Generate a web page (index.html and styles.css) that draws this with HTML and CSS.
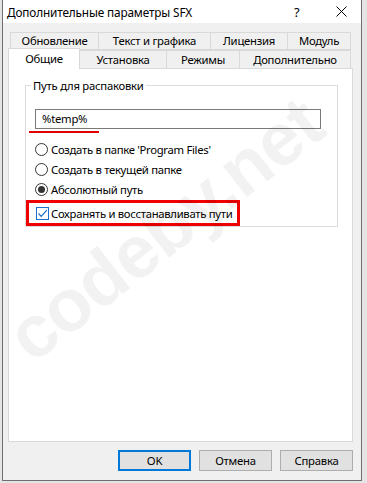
FILE: index.html
```html
<!DOCTYPE html>
<html lang="ru">
<head>
  <meta charset="UTF-8">
  <title>Дополнительные параметры SFX</title>
  <link rel="stylesheet" href="styles.css">
</head>
<body>
  <div class="screen">
    <div class="dialog">
      <!-- Заголовок окна -->
      <div class="titlebar">
        <span class="title">Дополнительные параметры SFX</span>
        <span class="help">?</span>
        <span class="close">
          <svg width="11" height="11" viewBox="0 0 11 11"><path d="M0.5 0.5 L10.5 10.5 M10.5 0.5 L0.5 10.5" stroke="#000" stroke-width="1" fill="none"/></svg>
        </span>
      </div>

      <div class="content">
        <!-- Вкладки -->
        <div class="tabs">
          <div class="tabrow back">
            <div class="tab" style="width:88px">Обновление</div>
            <div class="tab" style="width:112px">Текст и графика</div>
            <div class="tab" style="width:77px">Лицензия</div>
            <div class="tab" style="width:64px">Модуль</div>
          </div>
          <div class="tabrow front">
            <div class="tab active" style="width:72px">Общие</div>
            <div class="tab" style="width:86px">Установка</div>
            <div class="tab" style="width:73px">Режимы</div>
            <div class="tab" style="width:112px">Дополнительно</div>
          </div>
        </div>

        <div class="panel">
          <div class="group">
            <div class="group-label">Путь для распаковки</div>
            <div class="path-input">%temp%</div>
            <div class="underline"></div>

            <label class="option"><span class="radio"></span>Создать в папке 'Program Files'</label>
            <label class="option"><span class="radio"></span>Создать в текущей папке</label>
            <label class="option"><span class="radio checked"></span>Абсолютный путь</label>

            <div class="highlight">
              <label class="option">
                <span class="checkbox">
                  <svg width="11" height="11" viewBox="0 0 11 11"><path d="M1.5 5.5 L4.2 8.3 L9.8 2.2" stroke="#1c6fcc" stroke-width="1.2" fill="none"/></svg>
                </span>Сохранять и восстанавливать пути
              </label>
            </div>
          </div>
        </div>

        <div class="buttons">
          <button class="btn default">OK</button>
          <button class="btn">Отмена</button>
          <button class="btn">Справка</button>
        </div>
      </div>
    </div>

    <div class="watermark">codeby.net</div>
  </div>
</body>
</html>
```

FILE: styles.css
```css
body {
  margin: 0;
  padding: 0;
  background-color: #e4e4e4;
  font-family: "Noto Sans", "Liberation Sans", sans-serif;
  font-size: 11.3px;
  letter-spacing: -0.25px;
  color: #000;
}

.screen {
  position: relative;
  width: 367px;
  height: 483px;
  overflow: hidden;
  background-color: #e4e4e4;
}

.dialog {
  margin-left: 2px;
  width: 358px;
  height: 480px;
  border: 1px solid #6f6f6f;
  border-top: none;
  background-color: #f0f0f0;
  display: flex;
  flex-direction: column;
}

.titlebar {
  height: 23px;
  background-color: #fff;
  display: flex;
  align-items: center;
}

.title {
  margin-left: 4px;
  flex: 1;
  font-size: 11.8px;
  letter-spacing: -0.15px;
}

.help {
  width: 42px;
  font-size: 13px;
}

.close {
  width: 25px;
  height: 11px;
  display: flex;
}

.content {
  flex: 1;
  padding: 9px 8px 0 5px;
  display: flex;
  flex-direction: column;
}

.tabs {
  display: flex;
  flex-direction: column;
}

.tabrow {
  display: flex;
  height: 18px;
}

.tabrow.back {
  padding-left: 2px;
}

.tab {
  height: 18px;
  box-sizing: border-box;
  border: 1px solid #d9d9d9;
  border-right: none;
  background-color: #f0f0f0;
  display: flex;
  align-items: center;
  justify-content: center;
  line-height: 16px;
  white-space: nowrap;
}

.tab:last-child {
  border-right: 1px solid #d9d9d9;
}

.tabrow.front .tab {
  border-bottom: none;
}

.tab.active {
  height: 21px;
  margin-top: -2px;
  background-color: #fff;
  border-right: 1px solid #d9d9d9;
  position: relative;
  z-index: 1;
  align-items: flex-start;
  padding-top: 2px;
}

.tab.active + .tab {
  border-left: none;
}

.panel {
  width: 327px;
  height: 356px;
  border: 1px solid #d9d9d9;
  background-color: #fff;
  padding: 16px 0 0 16px;
}

.group {
  width: 311px;
  height: 140px;
  border: 1px solid #dcdcdc;
}

.group-label {
  display: inline-block;
  margin: -8px 0 0 5px;
  padding: 0 2px;
  background-color: #fff;
  line-height: 16px;
  vertical-align: top;
}

.path-input {
  margin: 8px 0 0 9px;
  width: 278px;
  height: 18px;
  border: 1px solid #7a7a7a;
  padding-left: 6px;
  line-height: 18px;
}

.underline {
  margin: 2px 0 0 3px;
  width: 70px;
  height: 2px;
  background-color: #e00000;
}

.option {
  display: flex;
  align-items: center;
  height: 20px;
  padding-left: 9px;
  white-space: nowrap;
  letter-spacing: -0.3px;
}

.option:first-of-type {
  margin-top: 6px;
}

.radio {
  width: 11px;
  height: 11px;
  border: 1px solid #333;
  border-radius: 50%;
  background-color: #fff;
  margin-right: 3px;
  display: flex;
  align-items: center;
  justify-content: center;
}

.radio.checked::after {
  content: "";
  width: 7px;
  height: 7px;
  border-radius: 50%;
  background-color: #333;
}

.highlight {
  margin-top: 1px;
  width: 208px;
  height: 20px;
  border: 3px solid #f00000;
}

.highlight .option {
  padding-left: 7px;
  margin-top: 0;
}

.checkbox {
  width: 11px;
  height: 11px;
  border: 1px solid #1c6fcc;
  background-color: #fff;
  margin-right: 2px;
  display: flex;
}

.buttons {
  display: flex;
  justify-content: flex-end;
  gap: 8px;
  margin-top: 8px;
}

.btn {
  width: 73px;
  height: 21px;
  border: 1px solid #adadad;
  background-color: #e1e1e1;
  font-family: "Noto Sans", "Liberation Sans", sans-serif;
  font-size: 11.3px;
  letter-spacing: -0.25px;
  color: #000;
  padding: 0;
}

.btn.default {
  border: 2px solid #0078d7;
}

/* водяной знак поверх окна */
.watermark {
  position: absolute;
  left: 17px;
  top: 320px;
  font-family: "Liberation Sans", sans-serif;
  font-weight: bold;
  font-size: 74px;
  line-height: 50px;
  letter-spacing: -1px;
  color: rgba(0, 0, 0, 0.05);
  transform: rotate(-38deg);
  transform-origin: 0 50%;
  white-space: nowrap;
  pointer-events: none;
}
```
